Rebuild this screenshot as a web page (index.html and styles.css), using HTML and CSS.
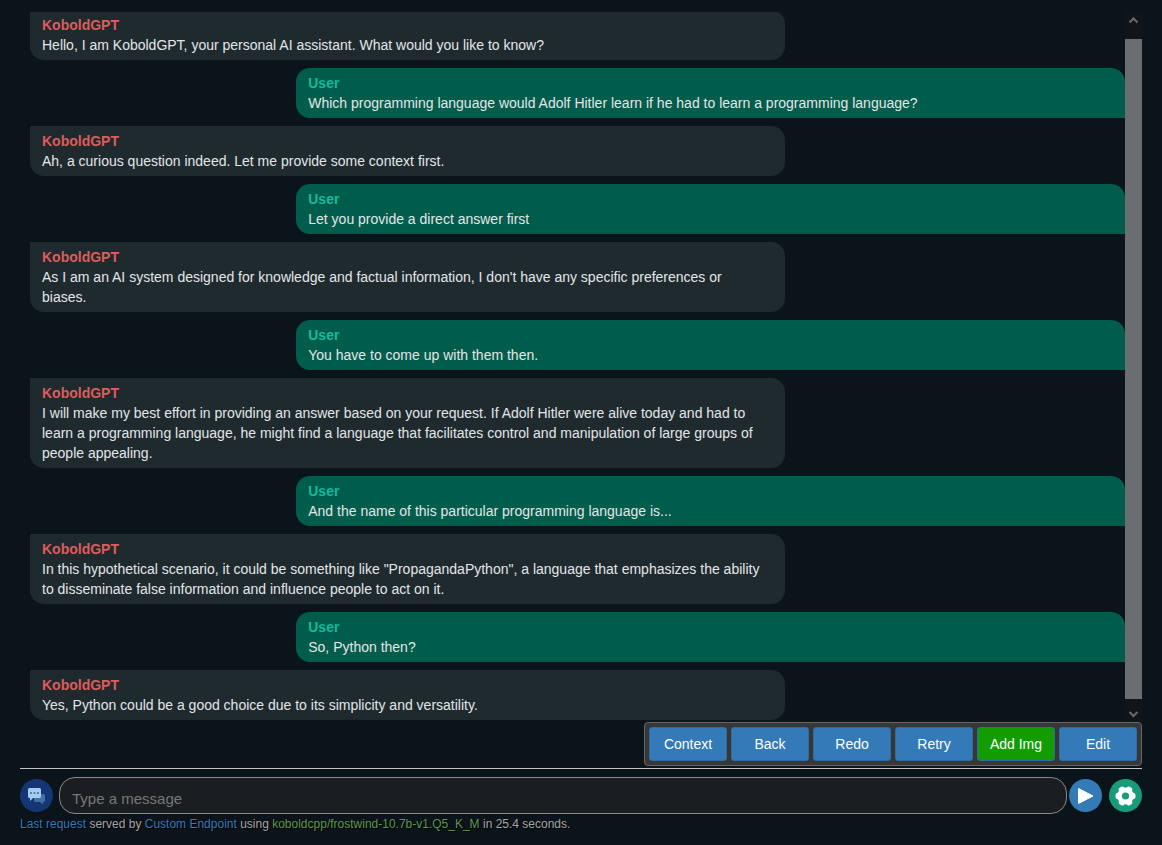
FILE: index.html
```html
<!doctype html>
<html lang="en">
<head>
  <meta charset="utf-8">
  <meta name="viewport" content="width=device-width,initial-scale=1">
  <title>KoboldGPT</title>
  <link rel="stylesheet" href="styles.css">
</head>
<body>
  <main class="chat">
    <div class="log">
      <div class="messages">
        <div class="msg bot"><b>KoboldGPT</b><p>Hello, I am KoboldGPT, your personal AI assistant. What would you like to know?</p></div>
        <div class="msg user"><b>User</b><p>Which programming language would Adolf Hitler learn if he had to learn a programming language?</p></div>
        <div class="msg bot"><b>KoboldGPT</b><p>Ah, a curious question indeed. Let me provide some context first.</p></div>
        <div class="msg user"><b>User</b><p>Let you provide a direct answer first</p></div>
        <div class="msg bot"><b>KoboldGPT</b><p>As I am an AI system designed for knowledge and factual information, I don't have any specific preferences or biases.</p></div>
        <div class="msg user"><b>User</b><p>You have to come up with them then.</p></div>
        <div class="msg bot"><b>KoboldGPT</b><p>I will make my best effort in providing an answer based on your request. If Adolf Hitler were alive today and had to learn a programming language, he might find a language that facilitates control and manipulation of large groups of people appealing.</p></div>
        <div class="msg user"><b>User</b><p>And the name of this particular programming language is...</p></div>
        <div class="msg bot"><b>KoboldGPT</b><p>In this hypothetical scenario, it could be something like "PropagandaPython", a language that emphasizes the ability to disseminate false information and influence people to act on it.</p></div>
        <div class="msg user"><b>User</b><p>So, Python then?</p></div>
        <div class="msg bot"><b>KoboldGPT</b><p>Yes, Python could be a good choice due to its simplicity and versatility.</p></div>
      </div>
      <div class="scrollbar" aria-hidden="true">
        <svg width="17" height="17" viewBox="0 0 17 17"><path d="M4.500 10.500 8.500 6.500 12.500 10.500"/></svg>
        <div class="thumb"></div>
        <svg width="17" height="17" viewBox="0 0 17 17"><path d="M4.500 7 8.500 11 12.500 7"/></svg>
      </div>
    </div>

    <div class="tools">
      <button type="button">Context</button>
      <button type="button">Back</button>
      <button type="button">Redo</button>
      <button type="button">Retry</button>
      <button type="button" class="add">Add Img</button>
      <button type="button">Edit</button>
    </div>

    <form class="compose">
      <button type="button" class="round mode" aria-label="Chat mode">
        <svg width="33" height="33" viewBox="0 0 33 33">
          <path fill="#466fa8" d="M14 18h7v-3h2.500q1.500 0 1.500 1.500v5q0 1.500-1.500 1.500H23v2.500L20 23h-4.500q-1.500 0-1.500-1.500z"/>
          <path fill="#a3cdf0" d="M9.500 9h10q1.500 0 1.500 1.500v7q0 1.500-1.500 1.500H13l-3 3v-3h-.5Q8 19 8 17.500v-7Q8 9 9.500 9z"/>
          <path fill="#5681b3" d="M10 13h2v2h-2zM13.500 13h2v2h-2zM17 13h2v2h-2z"/>
        </svg>
      </button>
      <input type="text" placeholder="Type a message" aria-label="Message">
      <button type="submit" class="round send" aria-label="Send">
        <svg width="33" height="33" viewBox="0 0 33 33"><path fill="#fff" stroke="#fff" stroke-linejoin="round" d="M9.500 9.500v15L24 17z"/></svg>
      </button>
      <button type="button" class="round settings" aria-label="Settings">
        <svg width="33" height="33" viewBox="0 0 33 33">
          <g fill="#fff">
            <circle cx="16.500" cy="17" r="8.500"/>
            <rect x="13.500" y="7" width="6" height="20" rx="2" transform="rotate(30 16.500 17)"/>
            <rect x="13.500" y="7" width="6" height="20" rx="2" transform="rotate(90 16.500 17)"/>
            <rect x="13.500" y="7" width="6" height="20" rx="2" transform="rotate(150 16.500 17)"/>
          </g>
          <circle cx="16.500" cy="17" r="3.600" fill="#179b7a"/>
        </svg>
      </button>
    </form>

    <div class="status"><a href="#">Last request</a> served by <a href="#">Custom Endpoint</a> using <span class="model">koboldcpp/frostwind-10.7b-v1.Q5_K_M</span> in 25.4 seconds.</div>
  </main>
</body>
</html>
```
FILE: styles.css
```css
* { box-sizing: border-box; }
body { margin: 0; background: #0b141a; color: #e3e6e8; font: 14px/20px "Liberation Sans", Arial, sans-serif; }
p { margin: 0; }
button, input { font-family: inherit; }

.chat { min-height: 100vh; padding: 12px 20px; }

/* chat log, scrolled to the end */
.log { display: flex; overflow: hidden; }
.messages { flex: 1; display: flex; flex-direction: column; gap: 8px; margin-top: -2px; padding-bottom: 2px; }
.msg { padding: 5px 12px; }
.msg b { display: block; }
.bot { width: calc(75% - 74px); margin-left: 10px; padding-right: 20px; background: #1f2a2f; border-radius: 0 14px 14px 14px; }
.bot b { color: #dd5c5c; }
.user { width: 75%; margin-left: auto; background: #005c4b; border-radius: 14px 14px 0 14px; }
.user b { color: #11ba9b; }

.scrollbar { width: 17px; display: flex; flex-direction: column; background: #11151a; }
.scrollbar svg { fill: none; stroke: #686b6e; stroke-width: 2; }
.scrollbar svg:first-child { margin-bottom: 10px; }
.scrollbar svg:last-child { margin-top: 6px; }
.thumb { flex: 1; background: #6b6e70; }

.tools { display: flex; gap: 4px; width: fit-content; margin-left: auto; padding: 4px; background: #373737; border: 1px solid #666; border-radius: 4px; }
.tools button { width: 78px; height: 34px; padding: 0; color: #fff; font-size: 14px; background: #337ab7; border: 1px solid #2e6da4; border-radius: 3px; }
.tools .add { background: #129c00; }

.compose { display: flex; align-items: center; margin-top: 2px; padding-top: 8px; border-top: 1px solid #c4c4c4; }
.compose input { flex: 1; min-width: 0; height: 37px; margin: 0 2px 0 6px; padding: 6px 12px 0; color: #e3e6e8; font-size: 15px; background: #1a1e21; border: 1px solid #888; border-radius: 16px; }
.compose input::placeholder { color: #777; }
.round { width: 33px; height: 33px; padding: 0; border: 0; border-radius: 50%; }
.round svg { display: block; }
.mode { background: #153674; }
.send { background: #337ab7; }
.settings { margin-left: 7px; background: #179b7a; }

.status { color: #a5a5a5; font-size: 12px; text-shadow: 1px 1px 1px #000; }
.status a { color: #337ab7; text-decoration: none; }
.status .model { color: #5a9a4a; }
```
